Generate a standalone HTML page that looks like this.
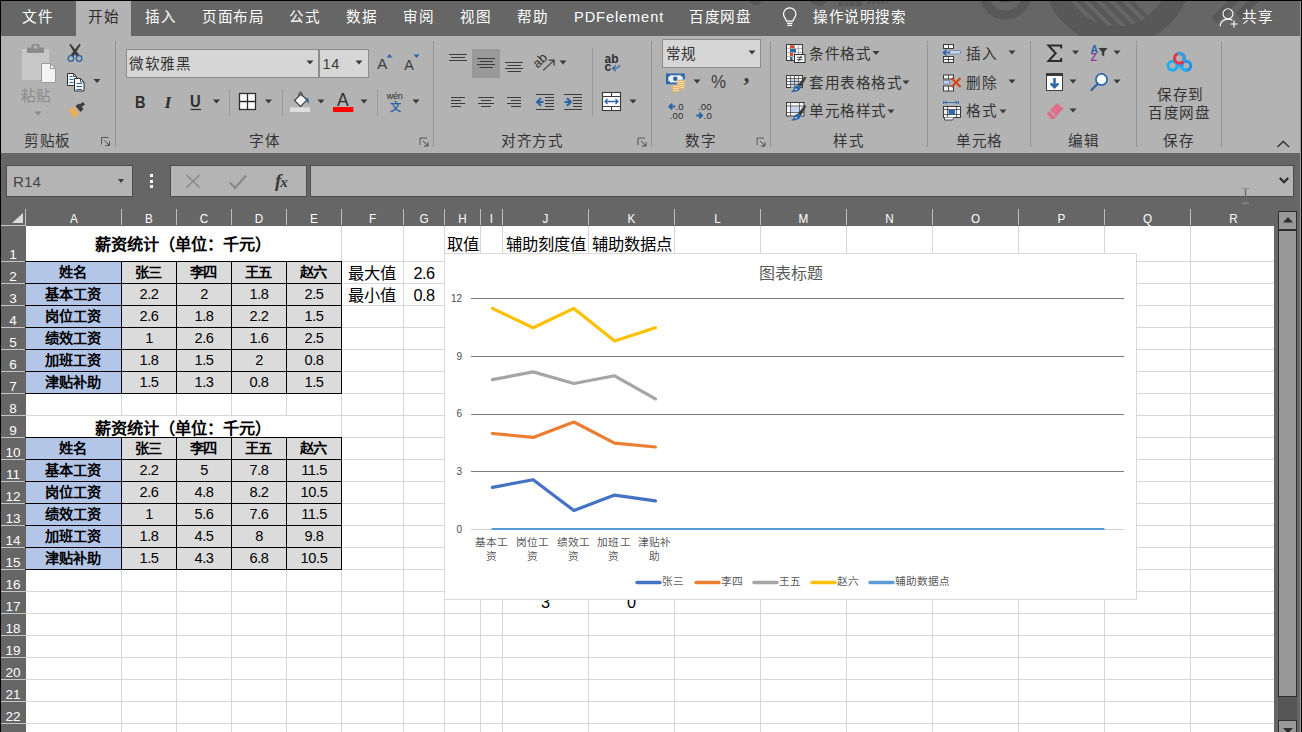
<!DOCTYPE html>
<html lang="zh-CN"><head><meta charset="utf-8"><title>Excel</title><style>
*{box-sizing:border-box;margin:0;padding:0}
html,body{width:1302px;height:732px;overflow:hidden;background:#666}
body{font-family:"Liberation Sans",sans-serif;position:relative;color:#262626}
.a{position:absolute}
.t{position:absolute;white-space:nowrap;line-height:1}
.tab{position:absolute;top:8.5px;font-size:14.6px;letter-spacing:.6px;line-height:16px;color:#fff;white-space:nowrap}
.rl{position:absolute;font-size:14.6px;letter-spacing:.6px;line-height:16px;color:#333;white-space:nowrap}
.gl{position:absolute;top:133px;font-size:15.2px;line-height:16px;color:#333;white-space:nowrap;text-align:center}
.sep{position:absolute;width:1px;background:#8d95a1;top:41px;height:106px}
.sep2{position:absolute;width:1px;background:#9a9a9a}
.dd{position:absolute;width:0;height:0;border-left:3.5px solid transparent;border-right:3.5px solid transparent;border-top:4px solid #3c3c3c}
.ch{position:absolute;top:212px;height:14px;font-size:13px;line-height:14px;color:#fff;text-align:center;transform:scaleX(.9)}
.cs{position:absolute;top:209px;height:16px;width:1px;background:#bdbdbd}
.rh{position:absolute;left:1px;width:24px;font-size:13.5px;line-height:14px;color:#fff;text-align:center}
.rs{position:absolute;left:1px;width:25px;height:1px;background:#c6c6c6}
.vg{position:absolute;width:1px;background:#d6d6d6}
.hg{position:absolute;height:1px;background:#d6d6d6}
.c{position:absolute;height:21px;line-height:21px;text-align:center;white-space:nowrap;color:#000}
.hd{background:#b4c6e7;font-weight:bold;font-size:14.2px;letter-spacing:-.2px;text-indent:-1px}
.dt{background:#dbdbdb;font-size:14.6px;letter-spacing:-0.4px}
.bk{position:absolute;background:#000}
.ct{position:absolute;white-space:nowrap;color:#595959}
</style></head><body>
<div class="a" style="left:0;top:0;width:1302px;height:36px;background:#666"></div>
<svg class="a" style="left:740px;top:1px" width="560" height="35" viewBox="740 1 560 35">
<defs><clipPath id="dc"><circle cx="1117.100" cy="-29.800" r="56"/></clipPath></defs>
<circle cx="1117.100" cy="-29.800" r="75.200" fill="#585858"/>
<g stroke="#666" stroke-width="4.100" clip-path="url(#dc)">
<path d="M1063.200 -9l70 70M1075.500 -9l70 70M1088.400 -9l70 70M1101.500 -9l70 70M1114.800 -9l70 70"/>
<path d="M1133.100 0L1148.100 16 1163.100 0z" fill="#666" stroke="none"/>
</g>
<circle cx="1005.500" cy="-6.300" r="21.450" fill="none" stroke="#585858" stroke-width="8.900"/>
<circle cx="1005.500" cy="-6.300" r="9.300" fill="#585858"/>
<circle cx="755.500" cy="-1" r="6.500" fill="#585858"/>
<path d="M808 0h18.500q-1 5-6 6-8-0.500-12.500-6z" fill="#585858"/>
<rect x="838.500" y="0" width="23.500" height="6" fill="#585858"/>
<g stroke="#585858">
<path d="M1236.500 -2L1214 20.500M1256.500 -2L1238.500 16" stroke-width="7.800"/>
<path d="M869 0v4.500M873.500 0v4.500M878 0v4M882.500 0v4M887 0v3.500" stroke-width="2.200"/>
</g>
<path d="M843.500 0v5M849 0v6M855 0v6" stroke="#666" stroke-width="1.300"/>
</svg>
<div class="a" style="left:76px;top:1px;width:55px;height:36px;background:#b3b3b3"></div>
<div class="tab" style="left:22px;color:#fff">文件</div>
<div class="tab" style="left:88px;color:#2b2b2b">开始</div>
<div class="tab" style="left:145px;color:#fff">插入</div>
<div class="tab" style="left:202px;color:#fff">页面布局</div>
<div class="tab" style="left:289px;color:#fff">公式</div>
<div class="tab" style="left:346px;color:#fff">数据</div>
<div class="tab" style="left:403px;color:#fff">审阅</div>
<div class="tab" style="left:460px;color:#fff">视图</div>
<div class="tab" style="left:517px;color:#fff">帮助</div>
<div class="tab" style="left:574px;color:#fff"><span style='letter-spacing:.9px'>PDFelement</span></div>
<div class="tab" style="left:689px;color:#fff">百度网盘</div>
<div class="tab" style="left:813px;color:#fff">操作说明搜索</div>
<div class="tab" style="left:1242px;color:#fff">共享</div>
<svg class="a" style="left:780px;top:6px" width="20" height="22" viewBox="0 0 20 22" fill="none" stroke="#fff" stroke-width="1.3">
<path d="M6.5 15.2c0-2.2-3-3.6-3-7.2a6.2 6.2 0 0 1 12.4 0c0 3.600-3 5-3 7.200z"/><path d="M7 17.300h5.400M7.300 19.300h4.800"/></svg>
<svg class="a" style="left:1218px;top:7px" width="24" height="22" viewBox="0 0 24 22" fill="none" stroke="#fff" stroke-width="1.1">
<circle cx="10" cy="6.800" r="5"/><path d="M2 19.500c.6-4.800 3.600-7.400 8-7.400 1.800 0 3.200.4 4.400 1.200"/><path d="M16 13.500v7M12.500 17h7"/></svg>
<div class="a" style="left:1px;top:36px;width:1299px;height:117px;background:#b3b3b3"></div>
<div class="rl" style="left:20.5px;top:87.5px;color:#8a8a8a">粘贴</div>
<div class="rl" style="left:24px;top:132.5px;color:#333">剪贴板</div>
<div class="sep" style="left:115px"></div>
<div class="a" style="left:126px;top:49px;width:193px;height:29px;background:#d6d6d6;border:1px solid #8c8c8c"></div>
<div class="a" style="left:319px;top:49px;width:50px;height:29px;background:#d6d6d6;border:1px solid #8c8c8c"></div>
<div class="rl" style="left:129px;top:56px;">微软雅黑</div>
<div class="rl" style="left:322.5px;top:56px;color:#3a3a3a">14</div>
<div class="rl" style="left:377.3px;top:56px;font-size:15px;color:#3a3a3a">A</div>
<div class="rl" style="left:404.3px;top:57.2px;font-size:14.300px;color:#3a3a3a">A</div>
<div class="rl" style="left:134.5px;top:93px;font-weight:bold;font-size:16.500px;line-height:18px;color:#2e2e2e;transform:scaleX(.88);transform-origin:0 0">B</div>
<div class="rl" style="left:164.5px;top:93px;font-weight:bold;font-style:italic;font-family:'Liberation Serif',serif;font-size:17.500px;line-height:18px;color:#2e2e2e">I</div>
<div class="rl" style="left:190px;top:93px;font-size:16px;font-weight:bold;line-height:18px;color:#2e2e2e;transform:scaleX(.92);transform-origin:0 0">U</div>
<div class="sep2" style="left:229px;top:89px;height:27px"></div>
<div class="sep2" style="left:282px;top:89px;height:27px"></div>
<div class="rl" style="left:337px;top:91.3px;font-size:17.500px;line-height:18px;color:#2e2e2e">A</div>
<div class="sep2" style="left:376.5px;top:89px;height:27px"></div>
<div class="rl" style="left:386.8px;top:90.5px;font-size:9px;line-height:11px;color:#2e2e2e;letter-spacing:-.3px">wén</div>
<div class="rl" style="left:389.5px;top:100.5px;font-size:11px;line-height:12px;color:#2b66a8;font-weight:bold">文</div>
<div class="rl" style="left:249px;top:132.5px;color:#333">字体</div>
<div class="sep" style="left:433px"></div>
<div class="a" style="left:472px;top:49px;width:28px;height:29px;background:#999"></div>
<div class="sep2" style="left:592px;top:48px;height:69px"></div>
<div class="rl" style="left:604.5px;top:52.8px;font-size:12px;line-height:12px;font-weight:bold;color:#2e2e2e;letter-spacing:.2px">ab</div>
<div class="rl" style="left:604.5px;top:60.8px;font-size:12px;line-height:12px;font-weight:bold;color:#2e2e2e">c</div>
<div class="rl" style="left:501.3px;top:132.5px;color:#333">对齐方式</div>
<div class="sep" style="left:651px"></div>
<div class="a" style="left:662px;top:39px;width:99px;height:29px;background:#d6d6d6;border:1px solid #8c8c8c"></div>
<div class="rl" style="left:665.5px;top:45.5px;">常规</div>
<div class="rl" style="left:710.5px;top:72.5px;font-size:18px;line-height:19px;color:#3b3b3b;transform:scaleX(.94);transform-origin:0 0">%</div>
<div class="rl" style="left:743.5px;top:59px;font-family:'Liberation Serif',serif;font-weight:bold;font-size:24px;line-height:28px;color:#3b3b3b">,</div>
<div class="rl" style="left:675.5px;top:101.1px;font-size:9.600px;line-height:11px;color:#2e2e2e;letter-spacing:.1px">.0</div>
<div class="rl" style="left:669.8px;top:110.1px;font-size:9.600px;line-height:11px;color:#2e2e2e;letter-spacing:.1px">.00</div>
<div class="rl" style="left:698px;top:101.1px;font-size:9.600px;line-height:11px;color:#2e2e2e;letter-spacing:.1px">.00</div>
<div class="rl" style="left:703.8px;top:110.1px;font-size:9.600px;line-height:11px;color:#2e2e2e;letter-spacing:.1px">.0</div>
<div class="rl" style="left:685px;top:132.5px;color:#333">数字</div>
<div class="sep" style="left:770px"></div>
<div class="rl" style="left:809px;top:45.5px;">条件格式</div>
<div class="rl" style="left:809px;top:74.5px;">套用表格格式</div>
<div class="rl" style="left:809px;top:103px;">单元格样式</div>
<div class="rl" style="left:833px;top:132.5px;color:#333">样式</div>
<div class="sep" style="left:927px"></div>
<div class="rl" style="left:966px;top:45.5px;">插入</div>
<div class="rl" style="left:966px;top:74.5px;">删除</div>
<div class="rl" style="left:966px;top:103px;">格式</div>
<div class="rl" style="left:956px;top:132.5px;color:#333">单元格</div>
<div class="sep" style="left:1030px"></div>
<div class="rl" style="left:1090.5px;top:43.5px;font-size:10.500px;line-height:11px;color:#2b66a8;font-weight:bold">A</div>
<div class="rl" style="left:1090.5px;top:51.5px;font-size:10.500px;line-height:11px;color:#8a3fa0;font-weight:bold">Z</div>
<div class="rl" style="left:1068px;top:132.5px;color:#333">编辑</div>
<div class="sep" style="left:1136px"></div>
<div class="rl" style="left:1157px;top:86.5px;">保存到</div>
<div class="rl" style="left:1148.3px;top:105px;">百度网盘</div>
<div class="rl" style="left:1163px;top:132.5px;color:#333">保存</div>
<div class="sep" style="left:1221px"></div>
<svg class="a" style="left:0;top:36px" width="1302" height="117" viewBox="0 36 1302 117"><rect x="22" y="49" width="27" height="31" fill="#c7c7c7"/><path d="M27 53v-4.500q0-1 1-1h3.500v-2q0-1.500 1.500-1.500h5q1.500 0 1.500 1.500v2H43q1 0 1 1V53zM33.500 45.500v3h4v-3z" fill="#8b8b8b" fill-rule="evenodd"/><path d="M41.500 63.500h9l5 5v14h-14z" fill="#f3f3f3" stroke="#9a9a9a"/><path d="M50.500 63.500v5h5" fill="none" stroke="#9a9a9a"/><path d="M34.5 111.5h7l-3.500 4z" fill="#8a8a8a"/><path d="M69.300 44.800l1.300-1 8.800 11.200-2.600 1.900z" fill="#3b3b3b"/><path d="M80.700 44.800l-1.300-1-8.800 11.200 2.600 1.900z" fill="#3b3b3b"/><circle cx="70.900" cy="58.500" r="2.800" stroke="#2b66a8" stroke-width="1.300" fill="none"/><circle cx="79.100" cy="58.500" r="2.800" stroke="#2b66a8" stroke-width="1.300" fill="none"/><path d="M67.500 73.500h6l3 3v9h-9z" fill="#f7f7f7" stroke="#2e2e2e"/><path d="M73.500 73.500v3h3" fill="none" stroke="#2e2e2e" stroke-width=".8"/><path d="M74.500 78.500h6l3.500 3.500v9h-9.500z" fill="#f7f7f7" stroke="#2e2e2e"/><path d="M80.500 78.500v3.500h3.500" fill="none" stroke="#2e2e2e" stroke-width=".8"/><path d="M69.500 76.500h3M69.500 79.500h4M69.500 82.500h4M76.500 83.500h5.500M76.500 86.500h5.500M76.500 89.500h5.500" stroke="#2b66a8" stroke-width="1.100" fill="none"/><path d="M93.5 79h7l-3.500 4z" fill="#3b3b3b"/><path d="M68 110l6-3.500 5 7-4.500 5z" fill="#e6b05f"/><path d="M75.500 106l3.500-2.500 4.500 5.500-3 3z" fill="#3b3b3b"/><path d="M79.500 104.500l3.500-2.500 2 2.500-3.500 2.500z" fill="#3b3b3b"/><path d="M101.5 144.5V137.5H108.5" stroke="#555" fill="none"/><path d="M104.5 140.5L109.5 145.5M109.5 141.5V145.5H105.5" stroke="#4a4a4a" fill="none"/><path d="M306.5 60.5h7l-3.500 4z" fill="#3b3b3b"/><path d="M355.5 60.5h7l-3.500 4z" fill="#3b3b3b"/><path d="M386.500 57.500l3-3.500 3 3.500z" fill="#2b66a8"/><path d="M413.500 54.500h6l-3 3.500z" fill="#2b66a8"/><path d="M190.500 109.500h10.500" stroke="#2e2e2e" stroke-width="1.200"/><path d="M213.0 99.5h7l-3.500 4z" fill="#3b3b3b"/><rect x="239.500" y="93.500" width="16" height="16" fill="#fff" stroke="#2e2e2e" stroke-width="1.300"/><path d="M247.500 93.500v16M239.500 101.500h16" stroke="#2e2e2e" stroke-width="1.300"/><path d="M265.0 99.5h7l-3.500 4z" fill="#3b3b3b"/><path d="M294.500 100.500l6.500-6.500 6 6-6.500 6.500z" fill="#f7f7f7" stroke="#3b3b3b" stroke-width="1.100"/><path d="M299 96v-2.500a1.500 1.500 0 0 1 3 0v3" fill="none" stroke="#3b3b3b" stroke-width="1"/><path d="M306.500 97.500c2.500 1 3 4 2 6.500-.8-2-1.500-2.800-3-3.500z" fill="#2b66a8"/><rect x="290" y="107.300" width="20" height="4.700" fill="#dedede"/><path d="M317.5 99.5h7l-3.500 4z" fill="#3b3b3b"/><rect x="333" y="107" width="20.300" height="5" fill="#ff0000"/><path d="M360.5 99.5h7l-3.500 4z" fill="#3b3b3b"/><path d="M412.5 99.5h7l-3.500 4z" fill="#3b3b3b"/><path d="M420.0 145.0V138.0H427.0" stroke="#555" fill="none"/><path d="M423.0 141.0L428.0 146.0M428.0 142.0V146.0H424.0" stroke="#4a4a4a" fill="none"/><path d="M449 54.5H467M451 57.5H465M449 60.5H467" stroke="#3b3b3b" stroke-width="1.2" fill="none"/><path d="M477 58.5H495M479.5 61.5H493M477 64.5H495M479.5 67.5H493" stroke="#3b3b3b" stroke-width="1.2" fill="none"/><path d="M505 62.5H523M507.5 65.5H521M505 68.5H523M507.5 71.5H521" stroke="#3b3b3b" stroke-width="1.2" fill="none"/><g transform="translate(544.200 62.300) rotate(-45)"><text x="-9" y="0" font-family="Liberation Sans, sans-serif" font-size="13" fill="#333">ab</text></g><path d="M543.200 70.400L553.700 60.600M548.800 60.200h5.300v5.300" stroke="#3b3b3b" stroke-width="1.200" fill="none"/><path d="M559.5 60.5h7l-3.500 4z" fill="#3b3b3b"/><path d="M451 97.5H465M451 100.5H461M451 103.5H465M451 106.5H461" stroke="#3b3b3b" stroke-width="1.2" fill="none"/><path d="M478 97.5H494M481 100.5H491M478 103.5H494M481 106.5H491" stroke="#3b3b3b" stroke-width="1.2" fill="none"/><path d="M507 97.5H521M511 100.5H521M507 103.5H521M511 106.5H521" stroke="#3b3b3b" stroke-width="1.2" fill="none"/><path d="M536 94.5H554M545 97.5H554M545 100.5H554M545 103.5H554M545 106.5H554M536 109.5H554" stroke="#3b3b3b" stroke-width="1.2" fill="none"/><path d="M543.500 102H538M541 98.300L537.200 102l3.800 3.700" stroke="#2b66a8" stroke-width="2.200" fill="none"/><path d="M564 94.5H582M573 97.5H582M573 100.5H582M573 103.5H582M573 106.5H582M564 109.5H582" stroke="#3b3b3b" stroke-width="1.2" fill="none"/><path d="M564.500 102H570M567 98.300L570.800 102l-3.800 3.700" stroke="#2b66a8" stroke-width="2.200" fill="none"/><path d="M619.500 65q0 3.500-6.500 3.500M616 65.500L612.500 68.500l3.500 2.500" stroke="#2b66a8" stroke-width="1.200" fill="none"/><rect x="602.500" y="92.500" width="18" height="18" fill="#fff" stroke="#3b3b3b" stroke-width="1.100"/><path d="M602.500 96.500h18M602.500 106.500h18M611.500 92.500v4M611.500 106.500v4" stroke="#3b3b3b" stroke-width="1.100" fill="none"/><path d="M605 101.500h13M607.500 99L605 101.500l2.500 2.500M615.500 99l2.500 2.500-2.500 2.500" stroke="#2b66a8" stroke-width="1.300" fill="none"/><path d="M629.5 99.5h7l-3.500 4z" fill="#3b3b3b"/><path d="M638.0 145.0V138.0H645.0" stroke="#555" fill="none"/><path d="M641.0 141.0L646.0 146.0M646.0 142.0V146.0H642.0" stroke="#4a4a4a" fill="none"/><path d="M748.5 50.5h7l-3.500 4z" fill="#3b3b3b"/><rect x="666" y="73.500" width="18.800" height="10.700" fill="#2b66a8"/><path d="M668.300 76.500h1.700v-1.200h11v1.200h1.700v4.800h-1.700v1.200h-11v-1.200h-1.700z" fill="#f4f4f4"/><circle cx="675.300" cy="78.800" r="2.300" fill="#2b66a8"/><rect x="677" y="79.500" width="8" height="9.500" fill="#c9c9c9"/><g fill="#f3e3c3" stroke="#e3a94d" stroke-width=".9"><ellipse cx="681" cy="87.500" rx="3.700" ry="1.200"/><ellipse cx="681" cy="85.500" rx="3.700" ry="1.200"/><ellipse cx="681" cy="83.500" rx="3.700" ry="1.200"/><ellipse cx="681" cy="81.500" rx="3.700" ry="1.200"/><ellipse cx="676" cy="90.500" rx="3.700" ry="1.200"/><ellipse cx="676" cy="88.500" rx="3.700" ry="1.200"/><ellipse cx="676" cy="86.500" rx="3.700" ry="1.200"/></g><path d="M693.5 79.5h7l-3.500 4z" fill="#3b3b3b"/><path d="M675.200 106.500H669.800M672.300 103.800L669.400 106.500l2.900 2.700" stroke="#2b66a8" stroke-width="1.900" fill="none"/><path d="M696.300 115.500H701.700M699.200 112.800L702.100 115.500l-2.900 2.700" stroke="#2b66a8" stroke-width="1.900" fill="none"/><path d="M757.0 145.0V138.0H764.0" stroke="#555" fill="none"/><path d="M760.0 141.0L765.0 146.0M765.0 142.0V146.0H761.0" stroke="#4a4a4a" fill="none"/><rect x="786.500" y="44.500" width="16" height="16" fill="#f8f8f8" stroke="#3b3b3b"/><path d="M790.500 45v15M794.500 45v15M798.500 45v15M787 48.500h15M787 52.500h15M787 56.500h15" stroke="#9a9a9a" stroke-width=".7" fill="none"/><rect x="790" y="45.200" width="4.200" height="3" fill="#d24a2a"/><rect x="790" y="53" width="3.200" height="3" fill="#d24a2a"/><rect x="790" y="49" width="6" height="3.200" fill="#2b66a8"/><rect x="790" y="57" width="2.600" height="3" fill="#2b66a8"/><rect x="794.500" y="54.500" width="10.500" height="8" fill="#fff" stroke="#2e2e2e"/><path d="M797 57.300h5.500M797 59.700h5.500M801.300 55.800l-3 5.600" stroke="#2e2e2e" stroke-width=".9" fill="none"/><path d="M872.5 51h7l-3.500 4z" fill="#3b3b3b"/><rect x="786.500" y="75.500" width="16" height="12" fill="#f8f8f8" stroke="#3b3b3b"/><rect x="790.500" y="78.500" width="8" height="9" fill="#c5d6ee"/><path d="M790.500 75.500v12M794.500 75.500v12M798.500 75.500v12M786.500 78.500h16M786.500 81.500h16M786.500 84.500h16" stroke="#4d4d4d" stroke-width=".8" fill="none"/><path d="M806.3 77.5L801.2 87.1L797.8 84.9L804.7 76.5z" fill="#3b3b3b"/><path d="M798.3 85.3L800.7 87Q800.5 90.5 796.5 91.5Q793.5 92.2 791.0 91.7Q793.5 90.5 794.2 88.2Q795.0 85.5 798.3 85.3z" fill="#2b66a8"/><circle cx="796.0" cy="89.3" r=".9" fill="#e8eef7"/><path d="M902.5 80.5h7l-3.500 4z" fill="#3b3b3b"/><rect x="786.500" y="102.500" width="17.500" height="13.500" fill="#f8f8f8" stroke="#3b3b3b"/><rect x="791" y="106.500" width="8" height="6" fill="#c5d6ee"/><path d="M786.500 106h17.500M786.500 112.500h17.500M790.500 102.500v13.500M799.500 102.500v13.500" stroke="#4d4d4d" stroke-width=".8" fill="none"/><path d="M806.3 106.0L801.2 115.6L797.8 113.4L804.7 105.0z" fill="#3b3b3b"/><path d="M798.3 113.8L800.7 115.5Q800.5 119.0 796.5 120.0Q793.5 120.7 791.0 120.2Q793.5 119.0 794.2 116.7Q795.0 114.0 798.3 113.8z" fill="#2b66a8"/><circle cx="796.0" cy="117.8" r=".9" fill="#e8eef7"/><path d="M887.5 109.5h7l-3.500 4z" fill="#3b3b3b"/><rect x="943.5" y="44.5" width="10" height="4" fill="#f7f7f7" stroke="#3b3b3b"/><path d="M948.5 44.5v4" stroke="#3b3b3b" stroke-width=".9" fill="none"/><rect x="943.5" y="56.5" width="10" height="6" fill="#f7f7f7" stroke="#3b3b3b"/><path d="M943.5 59.5h10M948.5 56.5v6" stroke="#3b3b3b" stroke-width=".9" fill="none"/><rect x="949.500" y="50.500" width="11" height="3.500" fill="#c3d3ea" stroke="#6f87ad" stroke-width=".8"/><path d="M950 52.500h-6.500M946.500 49.500l-3 3 3 3" stroke="#2b66a8" stroke-width="1.600" fill="none"/><path d="M1008.5 50.5h7l-3.500 4z" fill="#3b3b3b"/><rect x="943.5" y="75" width="10" height="4" fill="#f7f7f7" stroke="#3b3b3b"/><path d="M948.5 75v4" stroke="#3b3b3b" stroke-width=".9" fill="none"/><rect x="943.5" y="86" width="10" height="5" fill="#f7f7f7" stroke="#3b3b3b"/><path d="M948.5 86v5" stroke="#3b3b3b" stroke-width=".9" fill="none"/><rect x="943.500" y="80.500" width="6" height="3.500" fill="#c3d3ea" stroke="#6f87ad" stroke-width=".8"/><path d="M951.500 78l9 9M960.500 78l-9 9" stroke="#cf4520" stroke-width="2.200" fill="none"/><path d="M1008.5 79.5h7l-3.500 4z" fill="#3b3b3b"/><path d="M943.500 101v3M958.500 101v3M944.500 102.500h13M946.500 101l-2 1.500 2 1.500M955.500 101l2 1.500-2 1.500" stroke="#2b66a8" stroke-width=".9" fill="none"/><rect x="943.500" y="106.500" width="17" height="11" fill="#f7f7f7" stroke="#3b3b3b"/><path d="M943.500 109.500h17M943.500 114.500h17M947.500 106.500v11M956.500 106.500v11" stroke="#3b3b3b" stroke-width=".8" fill="none"/><rect x="948.500" y="110" width="6.500" height="4.500" fill="#2b66a8"/><path d="M944.500 117.500v2.500h8l1.500-2.500" stroke="#3b3b3b" stroke-width=".9" fill="#f7f7f7"/><path d="M999.5 109.5h7l-3.500 4z" fill="#3b3b3b"/><path d="M1061.200 48.500v-3h-12.700l7.200 7.700-7.200 7.800h12.700v-3" stroke="#2b2b2b" stroke-width="2" fill="none" stroke-linejoin="miter"/><path d="M1072.0 50.5h7l-3.500 4z" fill="#3b3b3b"/><path d="M1098.500 48h9l-3.300 4v4.500l-2.400-1.500v-3z" fill="#3b3b3b"/><path d="M1113.5 50.5h7l-3.500 4z" fill="#3b3b3b"/><rect x="1046.500" y="73.500" width="16" height="17" fill="#fff" stroke="#3b3b3b"/><rect x="1046.500" y="73.500" width="16" height="2.500" fill="#3b3b3b"/><path d="M1054.500 78v9M1050.700 83.300l3.800 4 3.800-4" stroke="#2b66a8" stroke-width="2.500" fill="none"/><path d="M1069.5 79.5h7l-3.500 4z" fill="#3b3b3b"/><circle cx="1101.500" cy="79.500" r="5.600" fill="#fdfdfd" stroke="#2b66a8" stroke-width="1.700"/><path d="M1097.500 84L1091.500 90" stroke="#2b66a8" stroke-width="2.200" stroke-linecap="round"/><path d="M1113.5 79.5h7l-3.500 4z" fill="#3b3b3b"/><path d="M1047 113.500l10-10.500 6.500 5.500-9.500 10.500h-3.500z" fill="#e0708a"/><path d="M1049.500 110.500l6 5.500" stroke="#b3b3b3" stroke-width="1.100"/><path d="M1069.5 108.5h7l-3.500 4z" fill="#3b3b3b"/><g fill="none" stroke-width="3.100"><circle cx="1172.600" cy="65.800" r="4.500" stroke="#22ade9"/><circle cx="1186.200" cy="65.800" r="4.500" stroke="#1f93e6"/><path d="M1172.600 61.300C1177.500 61.300 1181.300 70.300 1186.200 70.300" stroke="#26b2ee"/><circle cx="1179.400" cy="58.300" r="4.900" stroke="#e8344e"/><path d="M1177.300 53.870a4.900 4.900 0 0 1 5.900 7.500" stroke="#2aa2ea"/></g><path d="M1277.500 147l5.800-5.500 5.800 5.500" stroke="#2e2e2e" stroke-width="1.300" fill="none"/></svg>

<div class="a" style="left:6px;top:165px;width:127px;height:32px;background:#b4b4b4;border:1px solid #4d4d4d"></div>
<div class="a" style="left:170px;top:165px;width:137px;height:32px;background:#b4b4b4;border:1px solid #4d4d4d"></div>
<div class="a" style="left:310px;top:165px;width:984px;height:32px;background:#b4b4b4;border:1px solid #4d4d4d"></div>
<div class="t" style="left:13px;top:174px;font-size:15.2px;line-height:16px;color:#444">R14</div>
<div class="dd" style="left:118px;top:179px"></div>
<div class="a" style="left:150px;top:174px;width:3px;height:3px;background:#fff"></div>
<div class="a" style="left:150px;top:180px;width:3px;height:3px;background:#fff"></div>
<div class="a" style="left:150px;top:185px;width:3px;height:3px;background:#fff"></div>
<svg class="a" style="left:184px;top:172px" width="110" height="20" viewBox="0 0 110 20" fill="none">
<path d="M2.500 3l13 12.500M15.500 3l-13 12.500" stroke="#8a8a8a" stroke-width="1.600"/>
<path d="M46 10.500l5 5.500 11-12.500" stroke="#8a8a8a" stroke-width="2.200"/>
</svg>
<div class="t" style="left:275px;top:171px;font-family:'Liberation Serif',serif;font-style:italic;font-weight:bold;font-size:19px;line-height:20px;color:#3a3a3a;letter-spacing:-1px">f<span style="font-size:15px">x</span></div>
<svg class="a" style="left:1278px;top:176px" width="12" height="9" viewBox="0 0 12 9" fill="none" stroke="#2e2e2e" stroke-width="2.300"><path d="M1.800 2l4.200 4.200 4.200-4.200"/></svg>
<div class="a" style="left:26px;top:226px;width:1248px;height:506px;background:#fff"></div>
<div class="cs" style="left:25px"></div>
<div class="ch" style="left:27px;width:94px">A</div>
<div class="cs" style="left:121px"></div>
<div class="ch" style="left:122px;width:54px">B</div>
<div class="cs" style="left:176px"></div>
<div class="ch" style="left:177px;width:54px">C</div>
<div class="cs" style="left:231px"></div>
<div class="ch" style="left:232px;width:54px">D</div>
<div class="cs" style="left:286px"></div>
<div class="ch" style="left:287px;width:54px">E</div>
<div class="cs" style="left:341px"></div>
<div class="ch" style="left:342px;width:61px">F</div>
<div class="cs" style="left:403px"></div>
<div class="ch" style="left:404px;width:40px">G</div>
<div class="cs" style="left:444px"></div>
<div class="ch" style="left:445px;width:35px">H</div>
<div class="cs" style="left:480px"></div>
<div class="ch" style="left:481px;width:21px">I</div>
<div class="cs" style="left:502px"></div>
<div class="ch" style="left:503px;width:85px">J</div>
<div class="cs" style="left:588px"></div>
<div class="ch" style="left:589px;width:85px">K</div>
<div class="cs" style="left:674px"></div>
<div class="ch" style="left:675px;width:85px">L</div>
<div class="cs" style="left:760px"></div>
<div class="ch" style="left:761px;width:85px">M</div>
<div class="cs" style="left:846px"></div>
<div class="ch" style="left:847px;width:85px">N</div>
<div class="cs" style="left:932px"></div>
<div class="ch" style="left:933px;width:85px">O</div>
<div class="cs" style="left:1018px"></div>
<div class="ch" style="left:1019px;width:85px">P</div>
<div class="cs" style="left:1104px"></div>
<div class="ch" style="left:1105px;width:85px">Q</div>
<div class="cs" style="left:1190px"></div>
<div class="ch" style="left:1191px;width:85px">R</div>
<svg class="a" style="left:12px;top:213px" width="11" height="10" viewBox="0 0 11 10"><path d="M11 0v10H0z" fill="#dcdcdc"/></svg>
<div class="rs" style="top:225px"></div>
<div class="rs" style="top:261px"></div>
<div class="rh" style="top:248px">1</div>
<div class="rs" style="top:283px"></div>
<div class="rh" style="top:270px">2</div>
<div class="rs" style="top:305px"></div>
<div class="rh" style="top:292px">3</div>
<div class="rs" style="top:327px"></div>
<div class="rh" style="top:314px">4</div>
<div class="rs" style="top:349px"></div>
<div class="rh" style="top:336px">5</div>
<div class="rs" style="top:371px"></div>
<div class="rh" style="top:358px">6</div>
<div class="rs" style="top:393px"></div>
<div class="rh" style="top:380px">7</div>
<div class="rs" style="top:415px"></div>
<div class="rh" style="top:402px">8</div>
<div class="rs" style="top:437px"></div>
<div class="rh" style="top:424px">9</div>
<div class="rs" style="top:459px"></div>
<div class="rh" style="top:446px">10</div>
<div class="rs" style="top:481px"></div>
<div class="rh" style="top:468px">11</div>
<div class="rs" style="top:503px"></div>
<div class="rh" style="top:490px">12</div>
<div class="rs" style="top:525px"></div>
<div class="rh" style="top:512px">13</div>
<div class="rs" style="top:547px"></div>
<div class="rh" style="top:534px">14</div>
<div class="rs" style="top:569px"></div>
<div class="rh" style="top:556px">15</div>
<div class="rs" style="top:591px"></div>
<div class="rh" style="top:578px">16</div>
<div class="rs" style="top:613px"></div>
<div class="rh" style="top:600px">17</div>
<div class="rs" style="top:635px"></div>
<div class="rh" style="top:622px">18</div>
<div class="rs" style="top:657px"></div>
<div class="rh" style="top:644px">19</div>
<div class="rs" style="top:679px"></div>
<div class="rh" style="top:666px">20</div>
<div class="rs" style="top:701px"></div>
<div class="rh" style="top:688px">21</div>
<div class="rs" style="top:723px"></div>
<div class="rh" style="top:710px">22</div>
<div class="vg" style="left:121px;top:226px;height:506px"></div>
<div class="vg" style="left:176px;top:226px;height:506px"></div>
<div class="vg" style="left:231px;top:226px;height:506px"></div>
<div class="vg" style="left:286px;top:226px;height:506px"></div>
<div class="vg" style="left:341px;top:226px;height:506px"></div>
<div class="vg" style="left:403px;top:226px;height:506px"></div>
<div class="vg" style="left:444px;top:226px;height:506px"></div>
<div class="vg" style="left:480px;top:226px;height:506px"></div>
<div class="vg" style="left:502px;top:226px;height:506px"></div>
<div class="vg" style="left:588px;top:226px;height:506px"></div>
<div class="vg" style="left:674px;top:226px;height:506px"></div>
<div class="vg" style="left:760px;top:226px;height:506px"></div>
<div class="vg" style="left:846px;top:226px;height:506px"></div>
<div class="vg" style="left:932px;top:226px;height:506px"></div>
<div class="vg" style="left:1018px;top:226px;height:506px"></div>
<div class="vg" style="left:1104px;top:226px;height:506px"></div>
<div class="vg" style="left:1190px;top:226px;height:506px"></div>
<div class="hg" style="left:26px;top:261px;width:1248px"></div>
<div class="hg" style="left:26px;top:283px;width:1248px"></div>
<div class="hg" style="left:26px;top:305px;width:1248px"></div>
<div class="hg" style="left:26px;top:327px;width:1248px"></div>
<div class="hg" style="left:26px;top:349px;width:1248px"></div>
<div class="hg" style="left:26px;top:371px;width:1248px"></div>
<div class="hg" style="left:26px;top:393px;width:1248px"></div>
<div class="hg" style="left:26px;top:415px;width:1248px"></div>
<div class="hg" style="left:26px;top:437px;width:1248px"></div>
<div class="hg" style="left:26px;top:459px;width:1248px"></div>
<div class="hg" style="left:26px;top:481px;width:1248px"></div>
<div class="hg" style="left:26px;top:503px;width:1248px"></div>
<div class="hg" style="left:26px;top:525px;width:1248px"></div>
<div class="hg" style="left:26px;top:547px;width:1248px"></div>
<div class="hg" style="left:26px;top:569px;width:1248px"></div>
<div class="hg" style="left:26px;top:591px;width:1248px"></div>
<div class="hg" style="left:26px;top:613px;width:1248px"></div>
<div class="hg" style="left:26px;top:635px;width:1248px"></div>
<div class="hg" style="left:26px;top:657px;width:1248px"></div>
<div class="hg" style="left:26px;top:679px;width:1248px"></div>
<div class="hg" style="left:26px;top:701px;width:1248px"></div>
<div class="hg" style="left:26px;top:723px;width:1248px"></div>
<div class="a" style="left:26px;top:226px;width:315px;height:35px;background:#fff"></div>
<div class="a" style="left:26px;top:416px;width:315px;height:21px;background:#fff"></div>
<div class="t" style="font-weight:bold;font-size:16.2px;line-height:18px;color:#000;width:315px;text-align:center;left:25px;top:235px">薪资统计（单位：千元）</div>
<div class="t" style="font-weight:bold;font-size:16.2px;line-height:18px;color:#000;width:315px;text-align:center;left:25px;top:419px">薪资统计（单位：千元）</div>
<div class="c hd" style="left:26px;top:262px;width:95px">姓名</div>
<div class="c hd" style="left:122px;top:262px;width:54px;background:#dbdbdb">张三</div>
<div class="c hd" style="left:177px;top:262px;width:54px;background:#dbdbdb">李四</div>
<div class="c hd" style="left:232px;top:262px;width:54px;background:#dbdbdb">王五</div>
<div class="c hd" style="left:287px;top:262px;width:54px;background:#dbdbdb">赵六</div>
<div class="c hd" style="left:26px;top:284px;width:95px">基本工资</div>
<div class="c dt" style="left:122px;top:284px;width:54px">2.2</div>
<div class="c dt" style="left:177px;top:284px;width:54px">2</div>
<div class="c dt" style="left:232px;top:284px;width:54px">1.8</div>
<div class="c dt" style="left:287px;top:284px;width:54px">2.5</div>
<div class="c hd" style="left:26px;top:306px;width:95px">岗位工资</div>
<div class="c dt" style="left:122px;top:306px;width:54px">2.6</div>
<div class="c dt" style="left:177px;top:306px;width:54px">1.8</div>
<div class="c dt" style="left:232px;top:306px;width:54px">2.2</div>
<div class="c dt" style="left:287px;top:306px;width:54px">1.5</div>
<div class="c hd" style="left:26px;top:328px;width:95px">绩效工资</div>
<div class="c dt" style="left:122px;top:328px;width:54px">1</div>
<div class="c dt" style="left:177px;top:328px;width:54px">2.6</div>
<div class="c dt" style="left:232px;top:328px;width:54px">1.6</div>
<div class="c dt" style="left:287px;top:328px;width:54px">2.5</div>
<div class="c hd" style="left:26px;top:350px;width:95px">加班工资</div>
<div class="c dt" style="left:122px;top:350px;width:54px">1.8</div>
<div class="c dt" style="left:177px;top:350px;width:54px">1.5</div>
<div class="c dt" style="left:232px;top:350px;width:54px">2</div>
<div class="c dt" style="left:287px;top:350px;width:54px">0.8</div>
<div class="c hd" style="left:26px;top:372px;width:95px">津贴补助</div>
<div class="c dt" style="left:122px;top:372px;width:54px">1.5</div>
<div class="c dt" style="left:177px;top:372px;width:54px">1.3</div>
<div class="c dt" style="left:232px;top:372px;width:54px">0.8</div>
<div class="c dt" style="left:287px;top:372px;width:54px">1.5</div>
<div class="bk" style="left:25px;top:261px;width:317px;height:1px"></div>
<div class="bk" style="left:25px;top:283px;width:317px;height:1px"></div>
<div class="bk" style="left:25px;top:305px;width:317px;height:1px"></div>
<div class="bk" style="left:25px;top:327px;width:317px;height:1px"></div>
<div class="bk" style="left:25px;top:349px;width:317px;height:1px"></div>
<div class="bk" style="left:25px;top:371px;width:317px;height:1px"></div>
<div class="bk" style="left:25px;top:393px;width:317px;height:1px"></div>
<div class="bk" style="left:121px;top:261px;width:1px;height:133px"></div>
<div class="bk" style="left:176px;top:261px;width:1px;height:133px"></div>
<div class="bk" style="left:231px;top:261px;width:1px;height:133px"></div>
<div class="bk" style="left:286px;top:261px;width:1px;height:133px"></div>
<div class="bk" style="left:341px;top:261px;width:1px;height:133px"></div>
<div class="c hd" style="left:26px;top:438px;width:95px">姓名</div>
<div class="c hd" style="left:122px;top:438px;width:54px;background:#dbdbdb">张三</div>
<div class="c hd" style="left:177px;top:438px;width:54px;background:#dbdbdb">李四</div>
<div class="c hd" style="left:232px;top:438px;width:54px;background:#dbdbdb">王五</div>
<div class="c hd" style="left:287px;top:438px;width:54px;background:#dbdbdb">赵六</div>
<div class="c hd" style="left:26px;top:460px;width:95px">基本工资</div>
<div class="c dt" style="left:122px;top:460px;width:54px">2.2</div>
<div class="c dt" style="left:177px;top:460px;width:54px">5</div>
<div class="c dt" style="left:232px;top:460px;width:54px">7.8</div>
<div class="c dt" style="left:287px;top:460px;width:54px">11.5</div>
<div class="c hd" style="left:26px;top:482px;width:95px">岗位工资</div>
<div class="c dt" style="left:122px;top:482px;width:54px">2.6</div>
<div class="c dt" style="left:177px;top:482px;width:54px">4.8</div>
<div class="c dt" style="left:232px;top:482px;width:54px">8.2</div>
<div class="c dt" style="left:287px;top:482px;width:54px">10.5</div>
<div class="c hd" style="left:26px;top:504px;width:95px">绩效工资</div>
<div class="c dt" style="left:122px;top:504px;width:54px">1</div>
<div class="c dt" style="left:177px;top:504px;width:54px">5.6</div>
<div class="c dt" style="left:232px;top:504px;width:54px">7.6</div>
<div class="c dt" style="left:287px;top:504px;width:54px">11.5</div>
<div class="c hd" style="left:26px;top:526px;width:95px">加班工资</div>
<div class="c dt" style="left:122px;top:526px;width:54px">1.8</div>
<div class="c dt" style="left:177px;top:526px;width:54px">4.5</div>
<div class="c dt" style="left:232px;top:526px;width:54px">8</div>
<div class="c dt" style="left:287px;top:526px;width:54px">9.8</div>
<div class="c hd" style="left:26px;top:548px;width:95px">津贴补助</div>
<div class="c dt" style="left:122px;top:548px;width:54px">1.5</div>
<div class="c dt" style="left:177px;top:548px;width:54px">4.3</div>
<div class="c dt" style="left:232px;top:548px;width:54px">6.8</div>
<div class="c dt" style="left:287px;top:548px;width:54px">10.5</div>
<div class="bk" style="left:25px;top:437px;width:317px;height:1px"></div>
<div class="bk" style="left:25px;top:459px;width:317px;height:1px"></div>
<div class="bk" style="left:25px;top:481px;width:317px;height:1px"></div>
<div class="bk" style="left:25px;top:503px;width:317px;height:1px"></div>
<div class="bk" style="left:25px;top:525px;width:317px;height:1px"></div>
<div class="bk" style="left:25px;top:547px;width:317px;height:1px"></div>
<div class="bk" style="left:25px;top:569px;width:317px;height:1px"></div>
<div class="bk" style="left:121px;top:437px;width:1px;height:133px"></div>
<div class="bk" style="left:176px;top:437px;width:1px;height:133px"></div>
<div class="bk" style="left:231px;top:437px;width:1px;height:133px"></div>
<div class="bk" style="left:286px;top:437px;width:1px;height:133px"></div>
<div class="bk" style="left:341px;top:437px;width:1px;height:133px"></div>
<div class="t" style="font-size:16.3px;line-height:18px;color:#000;left:348px;top:264px">最大值</div>
<div class="t" style="font-size:16.3px;line-height:18px;color:#000;left:348px;top:286px">最小值</div>
<div class="t" style="font-size:16.3px;line-height:18px;color:#000;left:404px;width:40px;text-align:center;top:264px;letter-spacing:-0.5px">2.6</div>
<div class="t" style="font-size:16.3px;line-height:18px;color:#000;left:404px;width:40px;text-align:center;top:286px;letter-spacing:-0.5px">0.8</div>
<div class="t" style="font-size:16.3px;line-height:18px;color:#000;left:447px;top:235px">取值</div>
<div class="t" style="font-size:16.3px;line-height:18px;color:#000;left:506px;top:235px">辅助刻度值</div>
<div class="t" style="font-size:16.3px;line-height:18px;color:#000;left:592px;top:235px">辅助数据点</div>
<div class="t" style="font-size:16.3px;line-height:18px;color:#000;left:503px;width:85px;text-align:center;top:593px">3</div>
<div class="t" style="font-size:16.3px;line-height:18px;color:#000;left:589px;width:85px;text-align:center;top:593px">0</div>
<div class="a" style="left:444px;top:253px;width:693px;height:347px;background:#fff;border:1px solid #d9d9d9"></div>
<div class="ct" style="left:444px;width:693px;text-align:center;top:265px;font-size:16px;line-height:18px">图表标题</div>
<svg class="a" style="left:444px;top:253px" width="693" height="347" viewBox="444 253 693 347" fill="none"><path d="M471 471.5H1124" stroke="#7a7a7a" stroke-width="1"/><path d="M471 414.5H1124" stroke="#7a7a7a" stroke-width="1"/><path d="M471 356.5H1124" stroke="#7a7a7a" stroke-width="1"/><path d="M471 298.5H1124" stroke="#7a7a7a" stroke-width="1"/><path d="M471 529.5H1124" stroke="#d0d0d0" stroke-width="1"/><path d="M492.4 529H1103.6" stroke="#5b9bd5" stroke-width="2.200" stroke-linecap="round"/><polyline points="492.4,487.4 533.1,479.7 573.9,510.5 614.6,495.1 655.4,500.9" stroke="#4472c4" stroke-width="3.200" stroke-linecap="round" stroke-linejoin="round"/><polyline points="492.4,433.5 533.1,437.4 573.9,422.0 614.6,443.2 655.4,447.0" stroke="#ed7d31" stroke-width="3.200" stroke-linecap="round" stroke-linejoin="round"/><polyline points="492.4,379.6 533.1,371.9 573.9,383.5 614.6,375.8 655.4,398.9" stroke="#a5a5a5" stroke-width="3.200" stroke-linecap="round" stroke-linejoin="round"/><polyline points="492.4,308.4 533.1,327.7 573.9,308.4 614.6,341.1 655.4,327.7" stroke="#ffc000" stroke-width="3.200" stroke-linecap="round" stroke-linejoin="round"/><path d="M637 582.500H660" stroke="#4472c4" stroke-width="3.400" stroke-linecap="round"/><path d="M696 582.500H719" stroke="#ed7d31" stroke-width="3.400" stroke-linecap="round"/><path d="M754 582.500H777" stroke="#a5a5a5" stroke-width="3.400" stroke-linecap="round"/><path d="M812 582.500H835" stroke="#ffc000" stroke-width="3.400" stroke-linecap="round"/><path d="M870 582.500H893" stroke="#5b9bd5" stroke-width="3.400" stroke-linecap="round"/></svg>
<div class="ct" style="left:439px;width:23px;text-align:right;top:524px;font-size:10px;line-height:11px;color:#4d4d4d">0</div>
<div class="ct" style="left:439px;width:23px;text-align:right;top:466px;font-size:10px;line-height:11px;color:#4d4d4d">3</div>
<div class="ct" style="left:439px;width:23px;text-align:right;top:408px;font-size:10px;line-height:11px;color:#4d4d4d">6</div>
<div class="ct" style="left:439px;width:23px;text-align:right;top:351px;font-size:10px;line-height:11px;color:#4d4d4d">9</div>
<div class="ct" style="left:439px;width:23px;text-align:right;top:293px;font-size:10px;line-height:11px;color:#4d4d4d">12</div>
<div class="ct" style="left:466.9px;width:50px;text-align:center;top:536px;font-size:10.700px;letter-spacing:.2px;line-height:13.500px;white-space:normal">基本工<br>资</div>
<div class="ct" style="left:507.6px;width:50px;text-align:center;top:536px;font-size:10.700px;letter-spacing:.2px;line-height:13.500px;white-space:normal">岗位工<br>资</div>
<div class="ct" style="left:548.4px;width:50px;text-align:center;top:536px;font-size:10.700px;letter-spacing:.2px;line-height:13.500px;white-space:normal">绩效工<br>资</div>
<div class="ct" style="left:589.1px;width:50px;text-align:center;top:536px;font-size:10.700px;letter-spacing:.2px;line-height:13.500px;white-space:normal">加班工<br>资</div>
<div class="ct" style="left:629.9px;width:50px;text-align:center;top:536px;font-size:10.700px;letter-spacing:.2px;line-height:13.500px;white-space:normal">津贴补<br>助</div>
<div class="ct" style="left:661.5px;top:574.700px;font-size:10.700px;letter-spacing:.15px;line-height:13px">张三</div>
<div class="ct" style="left:720.5px;top:574.700px;font-size:10.700px;letter-spacing:.15px;line-height:13px">李四</div>
<div class="ct" style="left:778.5px;top:574.700px;font-size:10.700px;letter-spacing:.15px;line-height:13px">王五</div>
<div class="ct" style="left:836.5px;top:574.700px;font-size:10.700px;letter-spacing:.15px;line-height:13px">赵六</div>
<div class="ct" style="left:894.5px;top:574.700px;font-size:10.700px;letter-spacing:.15px;line-height:13px">辅助数据点</div>
<div class="a" style="left:1274px;top:208px;width:26px;height:524px;background:#666"></div>
<div class="a" style="left:1278px;top:231px;width:19px;height:489px;background:#555"></div>
<div class="a" style="left:1278px;top:211px;width:19px;height:19px;background:#999;border:1px solid #2e2e2e"></div>
<div class="a" style="left:1278px;top:230px;width:19px;height:467px;background:#999;border:1px solid #2e2e2e"></div>
<div class="a" style="left:1278px;top:720px;width:19px;height:19px;background:#999;border:1px solid #2e2e2e"></div>
<svg class="a" style="left:1283px;top:217px" width="10" height="6" viewBox="0 0 10 6"><path d="M0 5.500L5 0 10 5.500z" fill="#2e2e2e"/></svg>
<svg class="a" style="left:1283px;top:727.500px" width="10" height="6" viewBox="0 0 10 6"><path d="M0 0L5 5.500 10 0z" fill="#2e2e2e"/></svg>
<svg class="a" style="left:1241px;top:187px" width="9" height="18" viewBox="0 0 9 18" fill="none"><path d="M1 1.500h2.500l1 1 1-1H8M1 16.500h2.500l1-1 1 1H8" stroke="#8e8e8e" stroke-width="1.100"/><path d="M4.500 2.500v13" stroke="#8a8a8a" stroke-width="1.500"/><path d="M4.500 3v12" stroke="#3a3a3a" stroke-width=".5"/></svg>
<div class="a" style="left:0;top:0;width:1302px;height:1px;background:#000"></div>
<div class="a" style="left:0;top:0;width:1px;height:732px;background:#000"></div>
<div class="a" style="left:1300px;top:1px;width:1px;height:731px;background:#999"></div>
<div class="a" style="left:1301px;top:0;width:1px;height:732px;background:#000"></div>
</body></html>
